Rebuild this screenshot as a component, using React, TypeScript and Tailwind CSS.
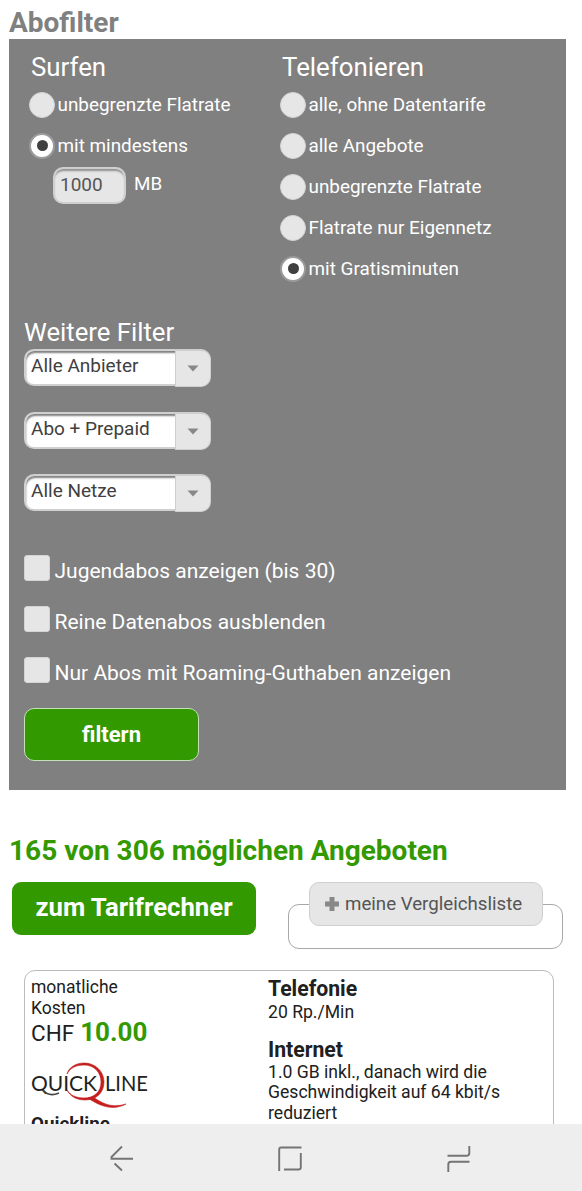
import React, { useState } from "react";

type OptionProps = { label: string; checked: boolean; onSelect: () => void };

function RadioOption({ label, checked, onSelect }: OptionProps) {
  return (
    <button
      type="button"
      role="radio"
      aria-checked={checked}
      onClick={onSelect}
      className="flex h-[41px] items-center whitespace-nowrap text-left"
    >
      <span
        className={
          checked
            ? "flex size-[26px] items-center justify-center rounded-full border-2 border-[#9b9b9b] bg-white"
            : "flex size-[26px] items-center justify-center rounded-full border border-[#d4d4d4] bg-[#e6e6e6]"
        }
      >
        {checked && <span className="ml-px size-[11px] rounded-full bg-[#404040]" />}
      </span>
      <span className="ml-[2.500px] mt-px text-[18.900px] leading-6">{label}</span>
    </button>
  );
}

function SelectBox({ label }: { label: string }) {
  return (
    <div className="flex h-[38px] w-[187px] items-start">
      <div className="h-[37px] w-[151px] rounded-l-[10px] border-2 border-r-0 border-[#d0d0d0] bg-white pl-[5px] text-[19px] leading-[30px] text-[#404040] shadow-[inset_1px_3px_2px_-1px_#808080]">
        {label}
      </div>
      <div className="flex h-[38px] w-[36px] items-center justify-center rounded-r-[10px] border border-t-2 border-[#cfcfcf] bg-[#e6e6e6]">
        <svg width="12" height="7" viewBox="0 0 12 7" fill="#888">
          <path d="M.5.5h11L6 6.500z" />
        </svg>
      </div>
    </div>
  );
}

function CheckOption({ label }: { label: string }) {
  return (
    <label className="flex h-[51px] items-start whitespace-nowrap">
      <span className="mt-[0.500px] size-[26px] rounded-[3px] border border-[#d4d4d4] bg-[#e6e6e6]" />
      <span className="ml-[4.500px] mt-[4px] text-[21px] leading-[26px]">{label}</span>
    </label>
  );
}

function QuicklineLogo() {
  return (
    <svg className="block" width="119" height="48" viewBox="0 0 119 48">
      <g fontFamily="Lato, sans-serif" fontSize="22" fill="#222">
        <text x="0" y="28.500" textLength="66" lengthAdjust="spacingAndGlyphs">QUICK</text>
        <text x="74" y="28.500" textLength="43" lengthAdjust="spacingAndGlyphs">LINE</text>
      </g>
      <path d="M12 28c4 5 9 6 16 3" fill="none" stroke="#444" strokeWidth="1.500" />
      <path
        d="M36 12C38 5 45 1 53 1c11 0 20 8 20 19s-8 18-19 18c-9 0-15-4-18-10 3 5 9 8 17 8 10 0 17-6 17-16S63 3 53 3C45 3 39 6 36 12z"
        fill="#c41e1e"
        stroke="#c41e1e"
        strokeWidth=".6"
      />
      <path d="M62 35c8 5 17 12 33 7-11 6-24 4-38-6z" fill="#c41e1e" stroke="#c41e1e" strokeWidth=".6" />
    </svg>
  );
}

const phoneOptions = [
  "alle, ohne Datentarife",
  "alle Angebote",
  "unbegrenzte Flatrate",
  "Flatrate nur Eigennetz",
  "mit Gratisminuten",
];

export default function App() {
  const [surf, setSurf] = useState(1);
  const [phone, setPhone] = useState(4);

  return (
    <div className="flex h-[1191px] w-[582px] flex-col overflow-hidden bg-white font-['Roboto',sans-serif] text-[#202020]">
      <main className="flex h-[1124px] shrink-0 flex-col overflow-hidden">
        <h1 className="mt-[7px] h-8 shrink-0 pl-[9px] text-[28px] font-bold leading-8 text-[#808080]">Abofilter</h1>

        <section className="ml-[9px] h-[751px] w-[557px] shrink-0 bg-[#808080] text-white">
          <div className="flex h-[277px] pl-5 pt-3">
            <div className="w-[251px]">
              <h2 className="h-[33px] pl-[2px] text-[25.800px] leading-8">Surfen</h2>
              <RadioOption label="unbegrenzte Flatrate" checked={surf === 0} onSelect={() => setSurf(0)} />
              <RadioOption label="mit mindestens" checked={surf === 1} onSelect={() => setSurf(1)} />
              <div className="ml-6 mt-px flex">
                <div className="h-[37px] w-[73px] rounded-[10px] border-2 border-[#cfcfcf] bg-[#e6e6e6] pl-[5px] text-[19px] leading-[31px] text-[#555] shadow-[inset_0_3px_2px_-1px_#909090]">
                  1000
                </div>
                <span className="ml-2 text-[18.800px] leading-[35px]">MB</span>
              </div>
            </div>
            <div>
              <h2 className="h-[33px] pl-[2px] text-[25.800px] leading-8">Telefonieren</h2>
              {phoneOptions.map((label, i) => (
                <RadioOption key={label} label={label} checked={phone === i} onSelect={() => setPhone(i)} />
              ))}
            </div>
          </div>

          <div className="pl-[15px]">
            <h2 className="h-[33px] text-[25.700px] leading-8">Weitere Filter</h2>
            <div className="flex h-[205px] flex-col gap-[24.500px]">
              <SelectBox label="Alle Anbieter" />
              <SelectBox label="Abo + Prepaid" />
              <SelectBox label="Alle Netze" />
            </div>
            <CheckOption label="Jugendabos anzeigen (bis 30)" />
            <CheckOption label="Reine Datenabos ausblenden" />
            <CheckOption label="Nur Abos mit Roaming-Guthaben anzeigen" />
            <button
              type="button"
              className="mt-px flex h-[53px] w-[175px] items-center justify-center rounded-[10px] border-[1.500px] border-[#c5dfb9] bg-[#339900] text-[22px] font-bold"
            >
              filtern
            </button>
          </div>
        </section>

        <h2 className="mt-[45px] h-8 shrink-0 whitespace-nowrap pl-[9px] text-[28px] font-bold leading-8 text-[#339900]">
          165 von 306 möglichen Angeboten
        </h2>

        <div className="mt-[15px] flex h-[88px] shrink-0 items-start pl-3">
          <button type="button" className="h-[53px] w-[244px] rounded-[9px] bg-[#339900] pb-[3px] text-[25.700px] font-bold text-white">
            zum Tarifrechner
          </button>
          <div className="relative ml-8 mt-[22px] h-[45px] w-[275px] rounded-[11px] border-[1.500px] border-[#a8a8a8]">
            <button
              type="button"
              className="absolute -top-[23px] left-[20px] flex h-[44px] w-[234px] items-center whitespace-nowrap rounded-[10px] border border-[#cfcfcf] bg-[#e6e6e6] pl-[15px] text-[18.700px] text-[#555]"
            >
              <svg width="14" height="14" viewBox="0 0 14 14" fill="#888">
                <path d="M4.500 0h5v4.500H14v5H9.500V14h-5V9.500H0v-5h4.500z" />
              </svg>
              <span className="ml-[6px]">meine Vergleichsliste</span>
            </button>
          </div>
        </div>

        <article className="ml-6 flex h-[240px] w-[530px] shrink-0 rounded-[11px] border-[1.500px] border-[#bcbcbc] pl-[6px] pt-[5px]">
          <div className="w-[237px]">
            <p className="mt-px w-[110px] text-[17.500px] leading-[21px]">
              monatliche
              <br />
              Kosten
            </p>
            <p className="-mt-px flex h-[30px] items-baseline gap-[6px] text-[22.500px] leading-[28px]">
              CHF <strong className="text-[26px] leading-[28px] text-[#339900]">10.00</strong>
            </p>
            <div className="mt-[14px]">
              <QuicklineLogo />
            </div>
            <p className="mt-[3px] text-[18.800px] font-bold leading-[22px]">Quickline</p>
          </div>
          <div className="text-[17.600px] leading-[20.700px]">
            <h3 className="h-[26px] text-[21.200px] font-bold leading-[25px]">Telefonie</h3>
            <p>20 Rp./Min</p>
            <h3 className="mt-[14px] h-[25px] text-[21.200px] font-bold leading-[25px]">Internet</h3>
            <p>
              1.0 GB inkl., danach wird die
              <br />
              Geschwindigkeit auf 64 kbit/s
              <br />
              reduziert
            </p>
          </div>
        </article>
      </main>

      <nav className="flex h-[67px] shrink-0 items-start bg-[#eee] pl-[108px] pt-[21px]">
        <svg width="28" height="28" viewBox="0 0 28 28" fill="none" stroke="#747474" strokeWidth="1.900">
          <path d="M14 1.500L3.500 12v1.700H25M6.500 18.500l7.500 7" />
        </svg>
        <svg className="ml-[140px]" width="28" height="28" viewBox="0 0 28 28" fill="none" stroke="#747474" strokeWidth="1.900">
          <path d="M25.500 2.500H5Q3.200 2.500 3.200 4.500V26M8 24.500H22.500Q24.800 24.500 24.800 22.500V8" />
        </svg>
        <svg className="ml-[140px]" width="28" height="28" viewBox="0 0 28 28" fill="none" stroke="#747474" strokeWidth="1.900">
          <path d="M3.500 10.800H22.500Q25.300 10.800 25.300 8V1M25.500 16.700H7Q4.300 16.700 4.300 19.500V27" />
        </svg>
      </nav>
    </div>
  );
}
